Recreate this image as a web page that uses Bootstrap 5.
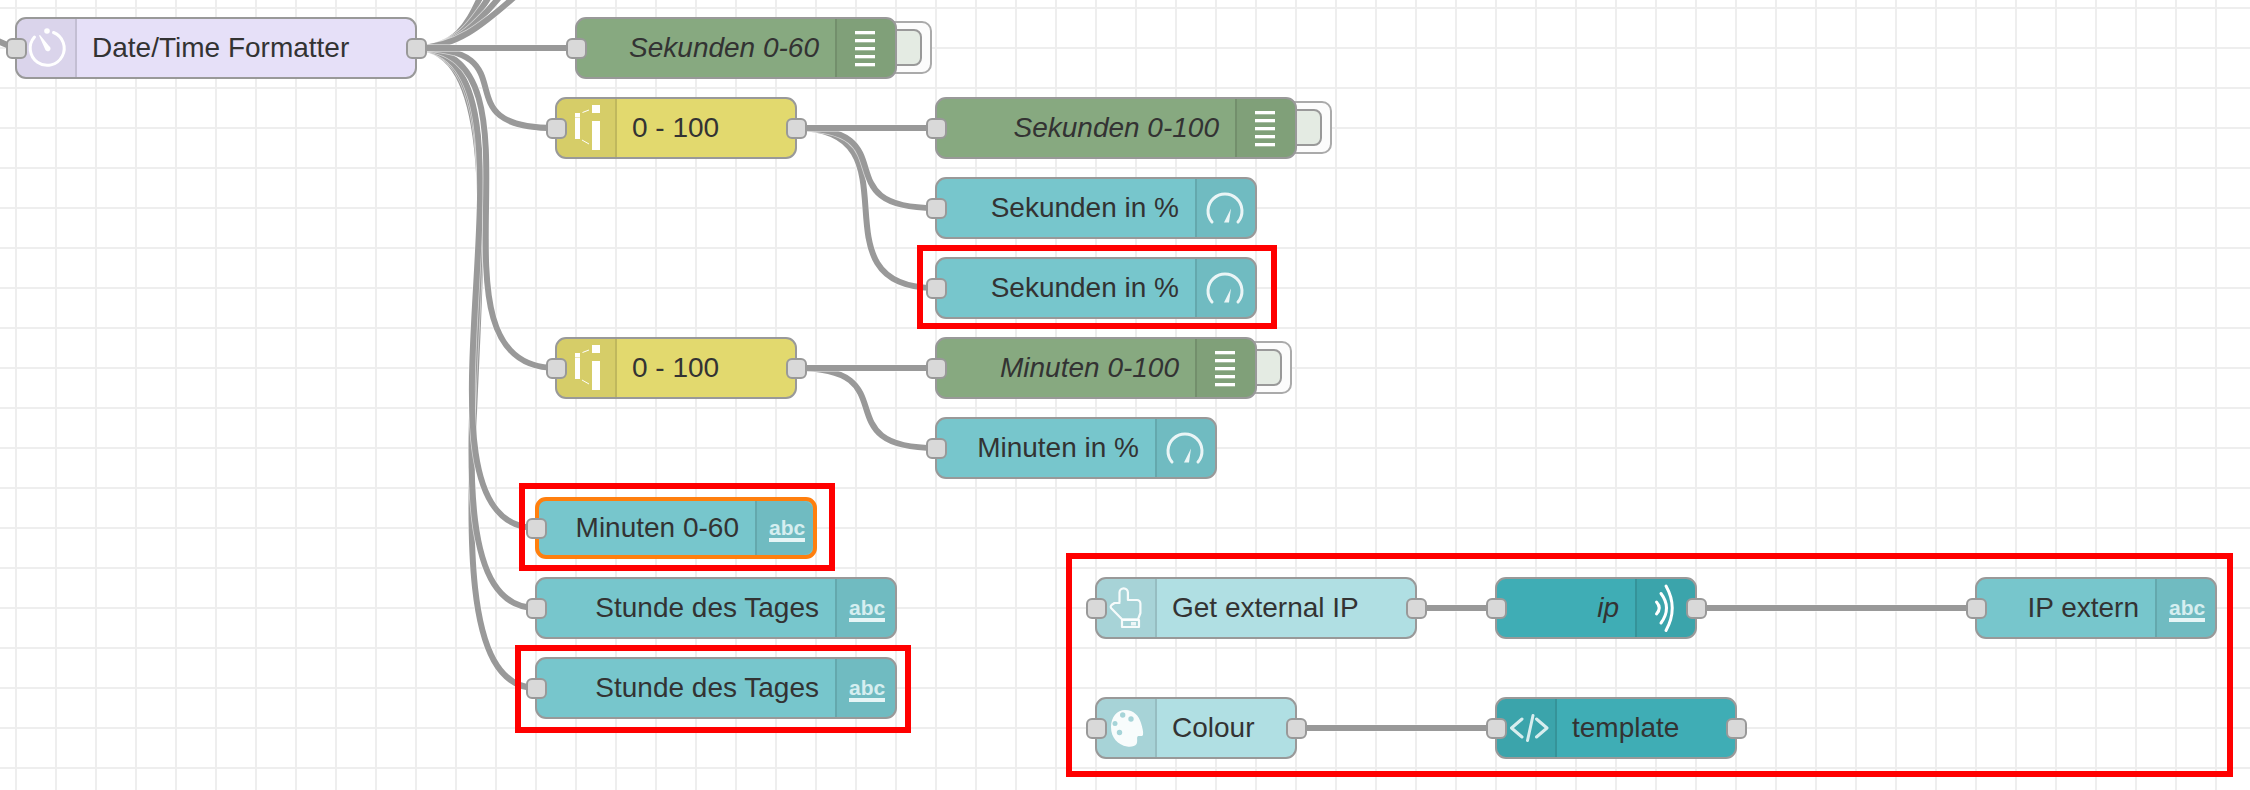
<!DOCTYPE html>
<html lang="en">
<head>
  <meta charset="UTF-8">
  <meta name="viewport" content="width=device-width, initial-scale=1">
  <title>Node-RED flow</title>
  <link href="https://cdn.jsdelivr.net/npm/bootstrap@5.3.3/dist/css/bootstrap.min.css" rel="stylesheet">

  <style>
    body {
      background-color: #fff;
    }

    .flow-canvas {
      width: 2250px;
      height: 790px;
      font-family: "Liberation Sans", Arial, sans-serif;
      background-image: linear-gradient(#eee 2px, transparent 2px), linear-gradient(90deg, #eee 2px, transparent 2px);
      background-size: 40px 40px;
      background-position: 15px 7px;
    }

    .wire-layer {
      left: 0;
      top: 0;
    }

    .wire-layer path {
      fill: none;
    }

    .wire-layer .wire-edge {
      stroke: rgba(255, 255, 255, .6);
      stroke-width: 7.5;
    }

    .wire-layer .wire-line {
      stroke: #999;
      stroke-width: 6;
    }

    .flow-node {
      height: 62px;
      border: 2px solid #999;
      border-radius: 11px;
      color: #333;
      font-size: 28px;
      line-height: 58px;
    }

    .flow-node.is-selected {
      border: 4px solid #ff7f0e;
      line-height: 54px;
    }

    .flow-body {
      border-radius: 9px;
      overflow: hidden;
    }

    .node-time { background-color: #e6e0f8; }
    .node-range { background-color: #e2d96e; }
    .node-debug { background-color: #87a980; }
    .node-ui { background-color: #77c6cc; }
    .node-inject { background-color: #b0dfe3; }
    .node-net { background-color: #3fadb5; }

    .node-icon {
      width: 60px;
      background-color: rgba(0, 0, 0, .05);
    }

    .is-selected .node-icon {
      width: 58px;
    }

    .node-icon svg {
      display: block;
    }

    .is-selected .node-icon svg {
      margin-top: -2px;
    }

    .sep-right { box-shadow: inset -2px 0 0 rgba(0, 0, 0, .1); }
    .sep-left { box-shadow: inset 2px 0 0 rgba(0, 0, 0, .1); }

    .node-label {
      padding: 0 16px 0 15px;
      white-space: nowrap;
    }

    .node-port {
      width: 21px;
      height: 21px;
      top: 18.5px;
      background-color: #d9d9d9;
      border: 2px solid #999;
      border-radius: 6px;
    }

    .port-in { left: -11.5px; }
    .port-out { right: -11.5px; }

    .is-selected .node-port {
      top: 16.5px;
    }

    .is-selected .port-in {
      left: -13px;
    }

    .debug-btn {
      height: 53px;
      width: 56px;
      border: 2px solid #aaa;
      border-radius: 10px;
      background-color: #fcfcfc;
    }

    .debug-btn-fill {
      height: 37px;
      width: 46px;
      left: -2px;
      top: 6px;
      border: 2px solid #999;
      border-radius: 8px;
      background-color: #e4ebe3;
    }

    .mark-box {
      border: 6px solid #f00;
      pointer-events: none;
    }

    .icon-line {
      fill: none;
      stroke: #fff;
      stroke-width: 3;
      stroke-linecap: round;
      stroke-linejoin: round;
    }

    .icon-thin {
      stroke-width: 2.2;
    }

    .icon-fill { fill: #fff; }

    .icon-abc {
      font-family: "Liberation Sans", Arial, sans-serif;
      font-size: 21px;
      font-weight: 700;
      fill: #d6eef0;
    }
  </style>
</head>
<body>

<div class="flow-canvas position-relative overflow-hidden" id="flow">
  <svg class="wire-layer position-absolute" width="2250" height="790" id="wires"></svg>
</div>

<script src="https://cdn.jsdelivr.net/npm/bootstrap@5.3.3/dist/js/bootstrap.bundle.min.js"></script>

<script>
  const icons = {
    timer: `<path class="icon-line" d="M36.5 14.5 A17 17 0 1 1 17.5 19"/><circle class="icon-fill" cx="30" cy="13" r="2.8"/><path class="icon-fill" d="M22 17.5 L23 17 L32 28 A2.8 2.8 0 1 1 28 31 Z"/>`,
    range: `<rect class="icon-fill" x="18" y="20" width="5" height="21"/><rect class="icon-fill" x="18" y="15" width="5" height="4.5"/><rect class="icon-fill" x="35" y="23" width="8" height="29"/><rect class="icon-fill" x="35" y="7" width="8" height="8"/><path d="M25.5 14.5 L32 12 M25 42 L32 46" stroke="#fff" fill="none"/>`,
    debug: `<rect class="icon-fill" x="20" y="13" width="20" height="3.3"/><rect class="icon-fill" x="20" y="21" width="20" height="3.3"/><rect class="icon-fill" x="20" y="29" width="20" height="3.3"/><rect class="icon-fill" x="20" y="37" width="20" height="3.3"/><rect class="icon-fill" x="20" y="45" width="20" height="3.3"/>`,
    gauge: `<path class="icon-line" opacity=".85" d="M17 44 A17 17 0 1 1 43 44"/><path class="icon-fill" opacity=".85" d="M29 44.5 L34 44.5 L36 30.5 Z"/>`,
    abc: `<text class="icon-abc" x="14" y="37">abc</text><rect fill="#e6f5f6" x="14" y="40" width="36" height="4"/>`,
    hand: `<path class="icon-line icon-thin" opacity=".9" d="M22.5 24 V14.5 a4.2 4.2 0 0 1 8.4 0 V22 H40 a3.4 3.4 0 0 1 3.4 3.4 V35 L41 41.3 H25 L14.5 30.5 a2.3 2.3 0 0 1 0 -3.5 L17.5 25 H22.5"/><path class="icon-line icon-thin" opacity=".9" d="M25 42 H42 V49 H25 Z"/><rect class="icon-fill" x="34" y="44" width="5" height="3.5" opacity=".8"/>`,
    palette: `<path class="icon-fill" opacity=".92" d="M28 12 C37 12 42 18 44 25 C45.5 30 46.5 34 46 37 C45 39 42 37 40.5 38.5 C39.5 40 41 43 39.5 46 C38 48.5 34 49 30 48.5 C21 47 14 40 14 29 C14 19 20 12 28 12 Z"/><circle cx="25.7" cy="17" r="2.7" fill="#a6d4d8"/><circle cx="34" cy="21" r="2.7" fill="#a6d4d8"/><circle cx="18" cy="25.5" r="2.5" fill="#a6d4d8"/><circle cx="22.5" cy="34.5" r="2.7" fill="#a6d4d8"/>`,
    wave: `<path class="icon-line" d="M21.5 24 Q27 30 21.5 36 M26 15.5 Q37 30 26 45 M31 8 Q43.5 30 31 52.5"/>`,
    code: `<path class="icon-line" opacity=".8" d="M25 21 L14.5 30 L25 39 M36 17.5 L30.5 42.5 M39.5 21 L50 30 L39.5 39"/>`
  };

  // x1, y1, x2, y2, d: bezier handle length (0 for a straight wire)
  const wires = [
    [-2, 41, 14, 48, 0],
    [416, 48, 542, -48, 80],
    [416, 48, 558, -48, 80],
    [416, 48, 578, -48, 80],
    [416, 48, 606, -48, 80],
    [416, 48, 536, 688, 150],
    [416, 48, 536, 608, 150],
    [416, 48, 536, 528, 148],
    [416, 48, 556, 368, 145],
    [416, 48, 555, 128, 118],
    [416, 48, 576, 48, 0],
    [796, 128, 935, 288, 128],
    [796, 128, 935, 208, 115],
    [796, 128, 935, 128, 0],
    [796, 368, 936, 448, 115],
    [796, 368, 936, 368, 0],
    [1416, 608, 1496, 608, 0],
    [1696, 608, 1976, 608, 0],
    [1296, 728, 1496, 728, 0]
  ];

  // x, y: top left of the node outline, w: width on the canvas
  const nodes = [
    { label: 'Date/Time Formatter', kind: 'node-time', icon: 'timer', x: 16, y: 18, w: 400, ports: 'io' },
    { label: 'Sekunden 0-60', kind: 'node-debug', icon: 'debug', x: 576, y: 18, w: 320, right: true, em: true, ports: 'i', btn: true },
    { label: '0 - 100', kind: 'node-range', icon: 'range', x: 556, y: 98, w: 240, ports: 'io' },
    { label: 'Sekunden 0-100', kind: 'node-debug', icon: 'debug', x: 936, y: 98, w: 360, right: true, em: true, ports: 'i', btn: true },
    { label: 'Sekunden in %', kind: 'node-ui', icon: 'gauge', x: 936, y: 178, w: 320, right: true, ports: 'i' },
    { label: 'Sekunden in %', kind: 'node-ui', icon: 'gauge', x: 936, y: 258, w: 320, right: true, ports: 'i' },
    { label: '0 - 100', kind: 'node-range', icon: 'range', x: 556, y: 338, w: 240, ports: 'io' },
    { label: 'Minuten 0-100', kind: 'node-debug', icon: 'debug', x: 936, y: 338, w: 320, right: true, em: true, ports: 'i', btn: true },
    { label: 'Minuten in %', kind: 'node-ui', icon: 'gauge', x: 936, y: 418, w: 280, right: true, ports: 'i' },
    { label: 'Minuten 0-60', kind: 'node-ui', icon: 'abc', x: 536, y: 498, w: 280, right: true, ports: 'i', selected: true },
    { label: 'Stunde des Tages', kind: 'node-ui', icon: 'abc', x: 536, y: 578, w: 360, right: true, ports: 'i' },
    { label: 'Stunde des Tages', kind: 'node-ui', icon: 'abc', x: 536, y: 658, w: 360, right: true, ports: 'i' },
    { label: 'Get external IP', kind: 'node-inject', icon: 'hand', x: 1096, y: 578, w: 320, ports: 'io' },
    { label: 'ip', kind: 'node-net', icon: 'wave', x: 1496, y: 578, w: 200, right: true, em: true, ports: 'io' },
    { label: 'IP extern', kind: 'node-ui', icon: 'abc', x: 1976, y: 578, w: 240, right: true, ports: 'i' },
    { label: 'Colour', kind: 'node-inject', icon: 'palette', x: 1096, y: 698, w: 200, ports: 'io' },
    { label: 'template', kind: 'node-net', icon: 'code', x: 1496, y: 698, w: 240, ports: 'io' }
  ];

  // red boxes drawn on top of the screenshot
  const marks = [
    [917, 245, 360, 84],
    [519, 483, 316, 88],
    [515, 645, 396, 88],
    [1066, 553, 1167, 224]
  ];

  const flow = document.getElementById('flow');

  document.getElementById('wires').innerHTML = wires.map(([x1, y1, x2, y2, d]) => {
    const path = d
      ? `M${x1} ${y1} C${x1 + d} ${y1} ${x2 - d} ${y2} ${x2} ${y2}`
      : `M${x1} ${y1} L${x2} ${y2}`;
    return `<path class="wire-edge" d="${path}"/><path class="wire-line" d="${path}"/>`;
  }).join('');

  nodes.forEach(n => {
    if (n.btn) {
      const btn = document.createElement('div');
      btn.className = 'debug-btn position-absolute';
      btn.style.left = (n.x + n.w - 20) + 'px';
      btn.style.top = (n.y + 3) + 'px';
      btn.innerHTML = '<div class="debug-btn-fill position-absolute"></div>';
      flow.appendChild(btn);
    }

    const el = document.createElement('div');
    el.className = 'flow-node position-absolute ' + n.kind + (n.selected ? ' is-selected' : '');
    el.style.left = (n.x - 1) + 'px';
    el.style.top = (n.y - 1) + 'px';
    el.style.width = (n.w + 2) + 'px';

    const icon = `<div class="node-icon flex-shrink-0 ${n.right ? 'sep-left' : 'sep-right'}">
      <svg width="60" height="58" viewBox="0 1 60 58">${icons[n.icon]}</svg></div>`;
    const label = `<div class="node-label flex-grow-1 ${n.right ? 'text-end' : ''} ${n.em ? 'fst-italic' : ''}">${n.label}</div>`;

    el.innerHTML = `<div class="flow-body d-flex h-100">${n.right ? label + icon : icon + label}</div>`
      + (n.ports.includes('i') ? '<div class="node-port port-in position-absolute"></div>' : '')
      + (n.ports.includes('o') ? '<div class="node-port port-out position-absolute"></div>' : '');
    flow.appendChild(el);
  });

  marks.forEach(m => {
    const box = document.createElement('div');
    box.className = 'mark-box position-absolute';
    box.style.left = m[0] + 'px';
    box.style.top = m[1] + 'px';
    box.style.width = m[2] + 'px';
    box.style.height = m[3] + 'px';
    flow.appendChild(box);
  });
</script>

</body>
</html>
